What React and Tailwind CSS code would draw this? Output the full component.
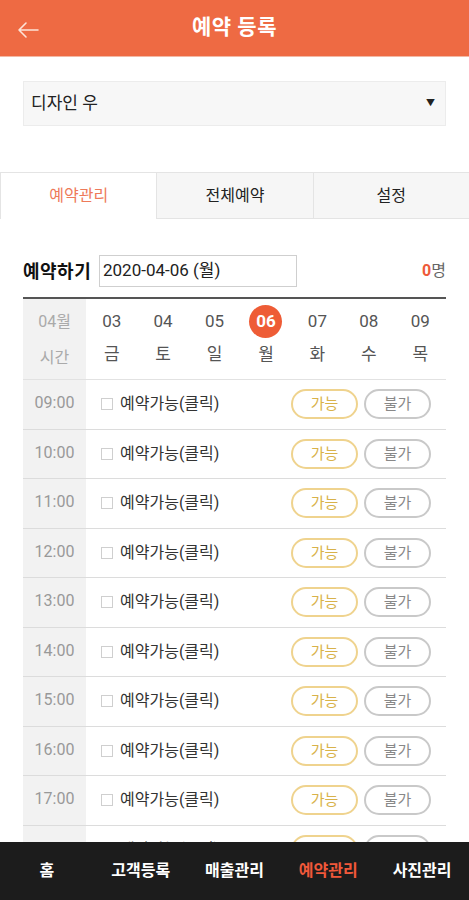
import React from 'react';

const days = [
    { n: '03', d: '금' },
    { n: '04', d: '토' },
    { n: '05', d: '일' },
    { n: '06', d: '월', active: true },
    { n: '07', d: '화' },
    { n: '08', d: '수' },
    { n: '09', d: '목' },
];

const times = ['09:00', '10:00', '11:00', '12:00', '13:00', '14:00', '15:00', '16:00', '17:00', '18:00'];

const navItems = [
    { label: '홈' },
    { label: '고객등록' },
    { label: '매출관리' },
    { label: '예약관리', active: true },
    { label: '사진관리' },
];

const App = () => {
    return (
        <div className="min-h-screen bg-white font-['Roboto','Noto_Sans_CJK_KR',sans-serif] text-[#333]">
            {/* header */}
            <header className="h-[57px] bg-[#ee6a43] border-b border-[#f3b8a4] flex items-center relative">
                <button className="absolute left-[12px] top-[16px] p-1" aria-label="back">
                    <svg className="w-[24px] h-[20px]" viewBox="0 0 24 20" fill="none" stroke="#fde3d8" strokeWidth={1.6} strokeLinecap="round" strokeLinejoin="round">
                        <path d="M22 10H3M10 3L3 10l7 7" />
                    </svg>
                </button>
                <h1 className="w-full text-center text-white text-[21px] font-bold tracking-wide">예약 등록</h1>
            </header>

            {/* select */}
            <div className="px-[23px] pt-[24px]">
                <div className="h-[45px] bg-[#f7f7f7] border border-[#ececec] flex items-center justify-between pl-[7px] pr-[10px]">
                    <span className="text-[17px] text-[#222]">디자인 우</span>
                    <span className="text-[9px] text-[#222]">▼</span>
                </div>
            </div>

            {/* tabs */}
            <div className="mt-[46px] grid grid-cols-3 h-[47px] text-[16px]">
                <div className="flex items-center justify-center bg-white border-t border-l border-[#e4e4e4] text-[#ee7a5a]">예약관리</div>
                <div className="flex items-center justify-center bg-[#f6f6f6] border-t border-l border-b border-[#e4e4e4] text-[#222]">전체예약</div>
                <div className="flex items-center justify-center bg-[#f6f6f6] border-t border-l border-b border-[#e4e4e4] text-[#222]">설정</div>
            </div>

            {/* date row */}
            <div className="px-[23px] mt-[36px] flex items-center h-[32px]">
                <span className="w-[76px] shrink-0 text-[18px] font-bold text-[#111] tracking-[0.5px]">예약하기</span>
                <div className="w-[198px] h-[32px] border border-[#cfcfcf] flex items-center pl-[3px] text-[17px] text-[#222]">2020-04-06 (월)</div>
                <span className="ml-auto text-[16px] text-[#666]"><span className="text-[#ee5a3a] font-bold">0</span>명</span>
            </div>

            {/* calendar */}
            <div className="mx-[23px] mt-[10px] border-t-2 border-[#555]">
                <div className="flex h-[81px] border-b border-[#e2e2e2]">
                    <div className="w-[63px] bg-[#f2f2f2] flex flex-col items-center text-[#aaa] text-[16px]">
                        <span className="mt-[11px] h-[24px] leading-[24px]">04월</span>
                        <span className="mt-[12px] leading-[24px]">시간</span>
                    </div>
                    <div className="flex-1 grid grid-cols-7">
                        {days.map(day => (
                            <div key={day.n} className="flex flex-col items-center text-[17px] text-[#555]">
                                <span className={`mt-[6px] w-[33px] h-[33px] flex items-center justify-center rounded-full ${day.active ? 'bg-[#ee5c36] text-white font-bold' : ''}`}>{day.n}</span>
                                <span className="mt-[4px] leading-[24px]">{day.d}</span>
                            </div>
                        ))}
                    </div>
                </div>

                {times.map(t => (
                    <div key={t} className="flex h-[49.5px] border-b border-[#dcdcdc]">
                        <div className="w-[63px] bg-[#f2f2f2] flex items-center justify-center text-[16px] text-[#999] pb-[2px]">{t}</div>
                        <div className="flex-1 flex items-center pl-[15px]">
                            <span className="w-[12px] h-[12px] border border-[#cfcfcf] bg-white"></span>
                            <span className="ml-[7px] text-[16px] text-[#333]">예약가능(클릭)</span>
                            <div className="ml-auto flex gap-[6px] mr-[15px]">
                                <span className="w-[67px] h-[30px] rounded-full border-2 border-[#efd38e] text-[#d8b24a] text-[15px] flex items-center justify-center">가능</span>
                                <span className="w-[67px] h-[30px] rounded-full border-2 border-[#c9c9c9] text-[#888] text-[15px] flex items-center justify-center">불가</span>
                            </div>
                        </div>
                    </div>
                ))}
            </div>

            {/* bottom nav */}
            <nav className="fixed bottom-0 left-0 right-0 h-[58px] bg-[#1c1c1c] flex items-center">
                {navItems.map(item => (
                    <span key={item.label} className={`flex-1 text-center text-[16px] font-bold ${item.active ? 'text-[#f0583a]' : 'text-white'}`}>{item.label}</span>
                ))}
            </nav>
        </div>
    );
};

export default App;
